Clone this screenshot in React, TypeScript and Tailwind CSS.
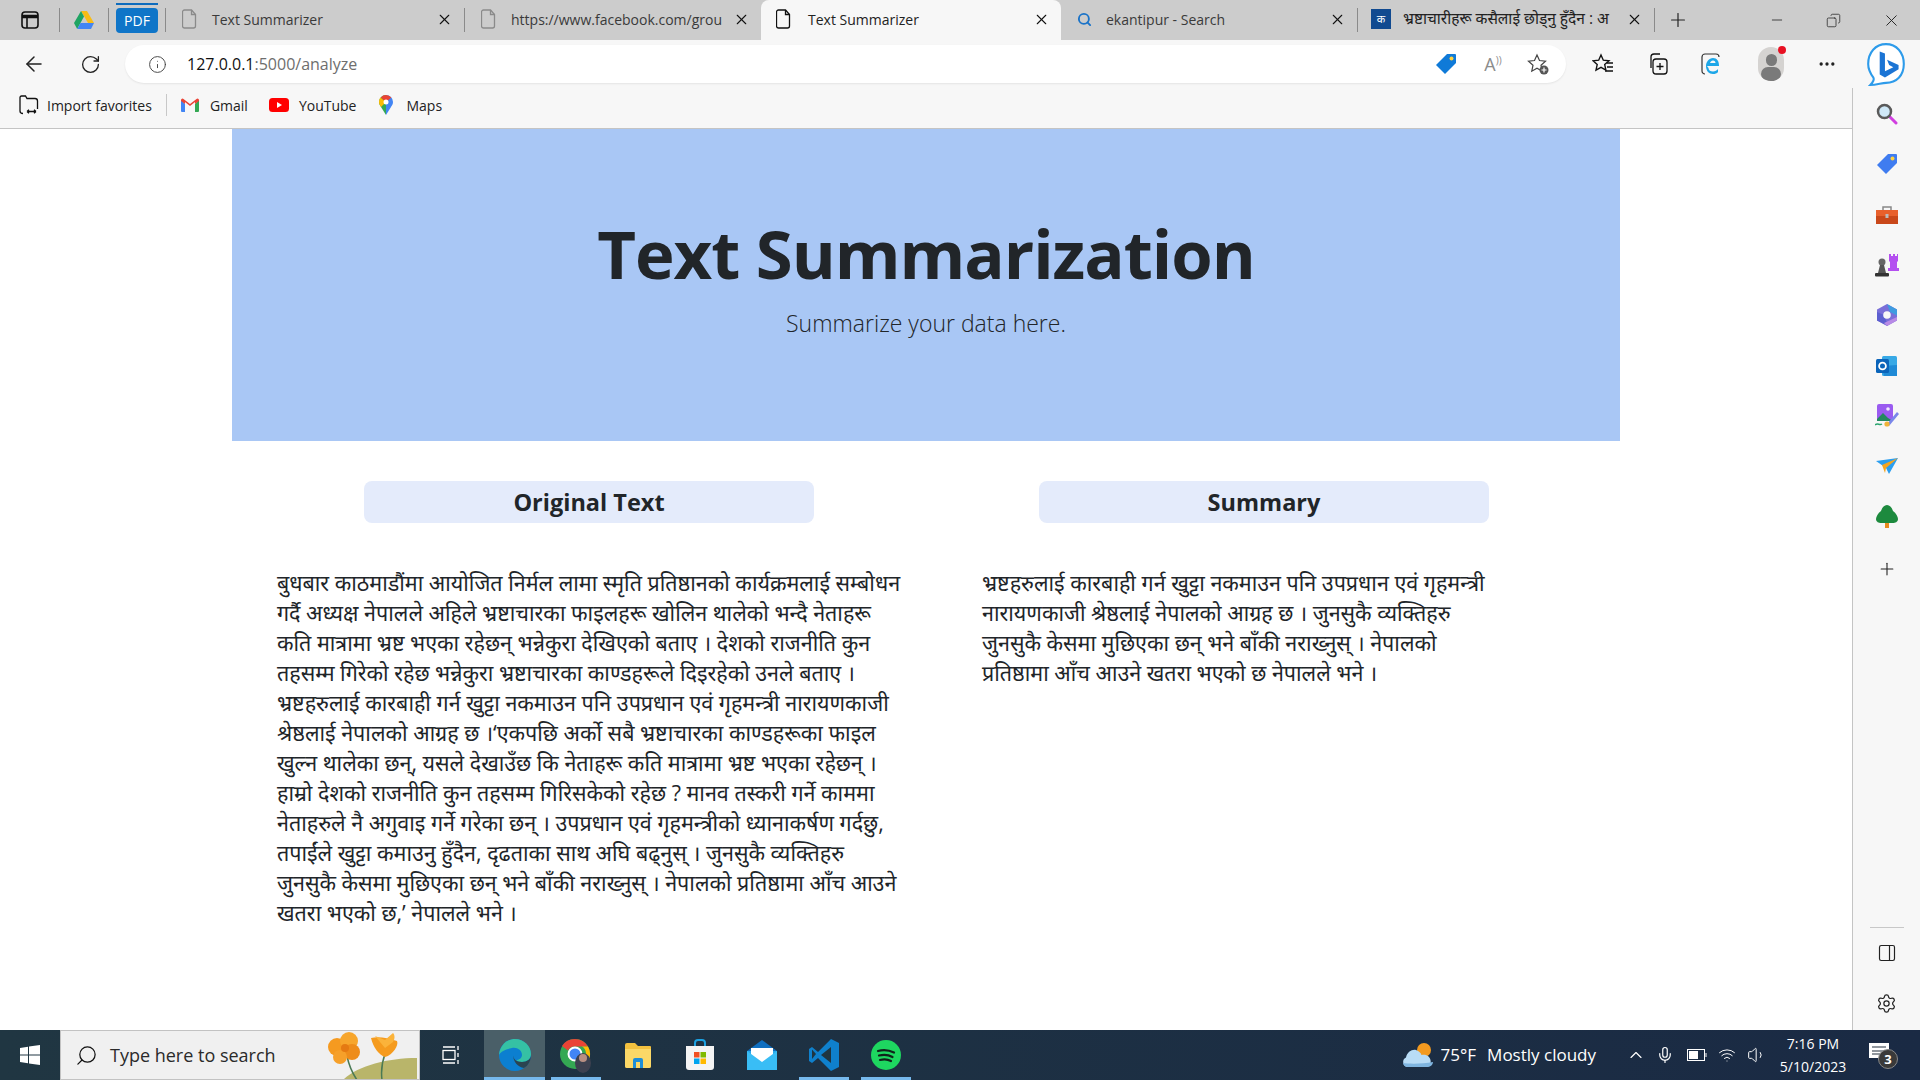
import React from "react";
import { ArrowLeft, RotateCw, Info, X, Plus, Minus, Copy, MoreHorizontal, Search, Settings, PanelRight, ChevronUp, Mic, Volume1, Wifi } from "lucide-react";

const orig = [
  "बुधबार काठमाडौंमा आयोजित निर्मल लामा स्मृति प्रतिष्ठानको कार्यक्रमलाई सम्बोधन",
  "गर्दै अध्यक्ष नेपालले अहिले भ्रष्टाचारका फाइलहरू खोलिन थालेको भन्दै नेताहरू",
  "कति मात्रामा भ्रष्ट भएका रहेछन् भन्नेकुरा देखिएको बताए । देशको राजनीति कुन",
  "तहसम्म गिरेको रहेछ भन्नेकुरा भ्रष्टाचारका काण्डहरूले दिइरहेको उनले बताए ।",
  "भ्रष्टहरुलाई कारबाही गर्न खुट्टा नकमाउन पनि उपप्रधान एवं गृहमन्त्री नारायणकाजी",
  "श्रेष्ठलाई नेपालको आग्रह छ ।‘एकपछि अर्को सबै भ्रष्टाचारका काण्डहरूका फाइल",
  "खुल्न थालेका छन्, यसले देखाउँछ कि नेताहरू कति मात्रामा भ्रष्ट भएका रहेछन् ।",
  "हाम्रो देशको राजनीति कुन तहसम्म गिरिसकेको रहेछ ? मानव तस्करी गर्ने काममा",
  "नेताहरुले नै अगुवाइ गर्ने गरेका छन् । उपप्रधान एवं गृहमन्त्रीको ध्यानाकर्षण गर्दछु,",
  "तपाईंले खुट्टा कमाउनु हुँदैन, दृढताका साथ अघि बढ्नुस् । जुनसुकै व्यक्तिहरु",
  "जुनसुकै केसमा मुछिएका छन् भने बाँकी नराख्नुस् । नेपालको प्रतिष्ठामा आँच आउने",
  "खतरा भएको छ,’ नेपालले भने ।",
];
const summary = [
  "भ्रष्टहरुलाई कारबाही गर्न खुट्टा नकमाउन पनि उपप्रधान एवं गृहमन्त्री",
  "नारायणकाजी श्रेष्ठलाई नेपालको आग्रह छ । जुनसुकै व्यक्तिहरु",
  "जुनसुकै केसमा मुछिएका छन् भने बाँकी नराख्नुस् । नेपालको",
  "प्रतिष्ठामा आँच आउने खतरा भएको छ नेपालले भने ।",
];

const Sep = () => <div className="w-px h-[24px] bg-[#8a8a8a] shrink-0" />;

const FileIcon = ({ c = "#8a8a8a" }: { c?: string }) => (
  <svg width="16" height="20" viewBox="0 0 16 20" fill="none" stroke={c} strokeWidth="1.300">
    <path d="M2.500 1h7l4 4.500V17a2 2 0 0 1-2 2h-9a2 2 0 0 1-2-2V3a2 2 0 0 1 2-2z" />
    <path d="M9.500 1v4.500h4" />
  </svg>
);

const Tab = ({ w, icon, label, active, pl = 16, gap = 14, big }: { w: string; icon: React.ReactNode; label: string; active?: boolean; pl?: number; gap?: number; big?: boolean }) => (
  <div className={`${w} ${active ? "bg-[#f7f7f7] rounded-t-lg text-[#222]" : "text-[#3a3a3a]"} h-full flex items-center shrink-0 ${pl === 15 ? "pl-[15px]" : "pl-[16px]"} pr-[11px] pb-[2px]`}>
    <div className="w-[16px] flex justify-center shrink-0">{icon}</div>
    <div className={`flex-1 min-w-0 whitespace-nowrap ${gap === 16 ? "ml-[16px]" : "ml-[14px]"} ${big ? "text-[15.500px] text-[#222]" : "text-[14px]"}`}>{label}</div>
    <X size={17} strokeWidth={1.500} className="shrink-0 ml-[2px] text-[#111]" />
  </div>
);

const Drive = () => (
  <svg width="20" height="18" viewBox="0 0 20 18">
    <path d="M7 0h6l7 12h-6z" fill="#f9bc15" />
    <path d="M7 0l3 5.500L3.200 18 0 12z" fill="#1fa463" />
    <path d="M6.500 12H20l-3 6H3.200z" fill="#4285f4" />
  </svg>
);
const Gmail = () => (
  <svg width="18" height="14" viewBox="0 0 18 14">
    <path d="M0 2v11a1 1 0 0 0 1 1h3V6z" fill="#4285f4" />
    <path d="M18 2v11a1 1 0 0 1-1 1h-3V6z" fill="#34a853" />
    <path d="M0 2a1.500 1.500 0 0 1 2.500-1L9 6l6.500-5A1.500 1.500 0 0 1 18 2v1l-4 3V4L9 8 4 4v2L0 3z" fill="#ea4335" />
  </svg>
);
const YouTube = () => (
  <svg width="20" height="14" viewBox="0 0 20 14">
    <rect width="20" height="14" rx="3.500" fill="#f00" />
    <path d="M8 4l5 3-5 3z" fill="#fff" />
  </svg>
);
const Pin = () => (
  <svg width="14" height="20" viewBox="0 0 14 20">
    <path d="M7 0a7 7 0 0 1 7 7c0 2-1 3.500-2 5L7 20z" fill="#4285f4" />
    <path d="M7 0a7 7 0 0 0-7 7c0 2 1 3.500 2 5l5 8z" fill="#34a853" />
    <path d="M1.500 2.500 7 7 2 12C1 10.500 0 9 0 7c0-1.700.5-3.300 1.500-4.500z" fill="#fbbc04" />
    <path d="M7 0a7 7 0 0 1 5.300 2.500L7 7 1.800 2.400A7 7 0 0 1 7 0z" fill="#ea4335" />
    <circle cx="7" cy="7" r="2.500" fill="#fff" />
  </svg>
);
const Tag = ({ s = 22, c = "#0f7ad8" }: { s?: number; c?: string }) => (
  <svg width={s} height={s} viewBox="0 0 22 22">
    <path d="M12 1h8a1 1 0 0 1 1 1v8L10 21 1 12z" fill={c} />
    <circle cx="16.500" cy="5.500" r="2" fill="#ffd23f" />
  </svg>
);
const Bing = () => (
  <svg width="42" height="44" viewBox="0 0 40 42" fill="none">
    <path d="M20 2c10 0 17 8 17 19s-7 18-17 18c-4 0-9 2-15 2 3-3 4-5 3-7-3-4-5-8-5-13C3 10 10 2 20 2z" stroke="#2d9bea" strokeWidth="2" fill="#fff" />
    <path d="M14 9l5 2v17l8-4-4-2-2-5 11 5v4l-13 8-5-3z" fill="#1b74d4" />
  </svg>
);
const Edge = () => (
  <svg width="34" height="34" viewBox="0 0 34 34">
    <circle cx="17" cy="17" r="16" fill="#0c7fd0" />
    <path d="M1 17C2 7 9 1 17 1c9 0 16 7 16 15 0 5-4 8-9 8-4 0-6-2-6-2 3 0 6-2 6-5 0-5-5-8-10-7C8 11 3 13 1 17z" fill="#35c1a4" />
    <path d="M33 17c0 4-4 7-9 7-6 0-9-3-9-8 0 8 5 13 11 14 4-2 7-7 7-13z" fill="#2b4450" />
  </svg>
);
const Chrome = () => (
  <svg width="34" height="36" viewBox="0 0 34 36">
    <circle cx="16" cy="17" r="15" fill="#34a853" />
    <path d="M16 2a15 15 0 0 1 13 7.500H16a7.500 7.500 0 0 0-7 4L3 9A15 15 0 0 1 16 2z" fill="#ea4335" />
    <path d="M29 9.500A15 15 0 0 1 18 32l6-10a7.500 7.500 0 0 0-1-12.500z" fill="#fbbc04" />
    <circle cx="16" cy="17" r="6.500" fill="#4285f4" stroke="#fff" strokeWidth="2" />
    <ellipse cx="24" cy="26" rx="8" ry="10" fill="#3d4150" />
    <circle cx="24" cy="21" r="4" fill="#b88f83" />
  </svg>
);
const Folder = () => (
  <svg width="28" height="28" viewBox="0 0 28 28">
    <path d="M1 4a2 2 0 0 1 2-2h8l3 3h12a1 1 0 0 1 1 1v19a2 2 0 0 1-2 2H3a2 2 0 0 1-2-2z" fill="#f3c13f" />
    <path d="M1 8h26v17a2 2 0 0 1-2 2H3a2 2 0 0 1-2-2z" fill="#fbd867" />
    <path d="M9 27v-8a2 2 0 0 1 2-2h6a2 2 0 0 1 2 2v8h-3v-6h-4v6z" fill="#1d8ed8" />
  </svg>
);
const Store = () => (
  <svg width="30" height="32" viewBox="0 0 30 32">
    <path d="M10 8V4a3 3 0 0 1 3-3h4a3 3 0 0 1 3 3v4" fill="none" stroke="#1ba1e2" strokeWidth="2" />
    <path d="M1 7h28v21a3 3 0 0 1-3 3H4a3 3 0 0 1-3-3z" fill="#f4f4f4" />
    <rect x="9" y="13" width="5.500" height="5.500" fill="#f25022" />
    <rect x="15.500" y="13" width="5.500" height="5.500" fill="#7fba00" />
    <rect x="9" y="19.500" width="5.500" height="5.500" fill="#00a4ef" />
    <rect x="15.500" y="19.500" width="5.500" height="5.500" fill="#ffb900" />
  </svg>
);
const Mail = () => (
  <svg width="30" height="30" viewBox="0 0 30 30">
    <path d="M0 11 15 0l15 11z" fill="#0f6fc0" />
    <path d="M0 11h30v19H0z" fill="#27a8ea" />
    <path d="M4 8h22v8l-11 7-11-7z" fill="#fff" />
    <path d="M0 11l15 11 15-11v19H0z" fill="#39bdf5" />
  </svg>
);
const VSCode = () => (
  <svg width="30" height="32" viewBox="0 0 30 32">
    <path d="M22 0l8 4v24l-8 4-13-13-6 5-3-2v-12l3-2 6 5z" fill="#0f80cc" />
    <path d="M22 8v16l-10-8z" fill="#1f3540" />
    <path d="M3 10.500 7 15 3 20z" fill="#1f3540" />
  </svg>
);
const Spotify = () => (
  <svg width="30" height="30" viewBox="0 0 30 30" fill="none">
    <circle cx="15" cy="15" r="15" fill="#1ed760" />
    <path d="M7 11c5-1.500 11-1 16 1.500M8 15.500c4.500-1.200 9.500-.8 13.500 1.500M9 20c3.500-1 8-.7 11 1" stroke="#10231a" strokeWidth="2.200" strokeLinecap="round" />
  </svg>
);
const Cloud = () => (
  <svg width="32" height="28" viewBox="0 0 32 28">
    <circle cx="22" cy="9" r="7" fill="#f39a1f" />
    <path d="M6 26a5 5 0 0 1-2-9.500C5 11 10 8 14 9c3 1 5 3 5.500 5 3-1 8 0 9 5 1 4-2 7-5 7z" fill="#b8dcf6" />
    <path d="M6 26a5 5 0 0 1-5-4c6 1 20 1 30-1 0 3-3 5-6 5z" fill="#7fb5e0" />
  </svg>
);
const Flowers = () => (
  <svg width="104" height="50" viewBox="0 0 100 50" className="shrink-0">
    <path d="M26 50C40 36 70 28 100 28v22z" fill="#b9b56a" />
    <path d="M30 26c2 10 6 18 10 24" stroke="#4a7a55" strokeWidth="1.500" fill="none" />
    <path d="M68 24c-3 8-4 18-3 26" stroke="#4a7a55" strokeWidth="1.500" fill="none" />
    <circle cx="20" cy="17" r="9" fill="#f59a20" />
    <circle cx="32" cy="11" r="9" fill="#f7a62c" />
    <circle cx="35" cy="22" r="8" fill="#ee8c1a" />
    <circle cx="23" cy="27" r="7" fill="#f6a02a" />
    <circle cx="28" cy="18" r="4" fill="#e57a12" />
    <path d="M54 8c8-2 16 0 26 3 2 4-4 14-12 16-6-2-12-10-14-19z" fill="#f59b1e" />
    <path d="M58 6l10 4 8-7c2 2 2 6 0 9l-8 6z" fill="#fbb33a" />
  </svg>
);

const SideGlyphs = [
  <svg width="22" height="22" viewBox="0 0 22 22" key="a"><path d="M13 13l7 7" stroke="#d13fe0" strokeWidth="3" strokeLinecap="round" /><circle cx="8.500" cy="8.500" r="6.500" fill="#cfe8f7" stroke="#5a5a5a" strokeWidth="2.500" /></svg>,
  <Tag key="b" s={22} c="#3f7cf0" />,
  <svg width="24" height="20" viewBox="0 0 24 20" key="c"><path d="M8 5V2h8v3" fill="none" stroke="#888" strokeWidth="1.500" /><path d="M1 5h22v6H1z" fill="#e8602c" /><path d="M1 11h22v8H1z" fill="#c9481a" /><rect x="10.500" y="9" width="3" height="4" fill="#bbb" /></svg>,
  <svg width="24" height="24" viewBox="0 0 24 24" key="d"><path d="M14 1h2v2h2V1h2v2h2V1h1v7l-1 1v6h2v3H13v-3h2V9l-1-1z" fill="#b44ff0" /><circle cx="7" cy="9" r="3.500" fill="#666" /><path d="M5 12h4l2 8H3z" fill="#555" /><rect x="0" y="20" width="14" height="3.500" rx="1" fill="#333" /></svg>,
  <svg width="22" height="24" viewBox="0 0 22 24" key="e"><path d="M11 1l10 5.500v11L11 23 1 17.500v-11z" fill="#7a6fd8" /><path d="M11 1l10 5.500v6L14 9z" fill="#3f9be0" /><path d="M1 17.500V9l7 3 4 11z" fill="#5c5fd0" /><path d="M21 14v3.500L11 23l-3-3z" fill="#b88ae6" /><circle cx="11" cy="12" r="3.800" fill="#f7f7f7" /></svg>,
  <svg width="22" height="22" viewBox="0 0 22 22" key="f"><rect x="6" y="1" width="15" height="20" rx="1.500" fill="#38a9e6" /><path d="M6 11l15-1v11H8z" fill="#1f8ad6" /><rect x="0" y="4" width="13" height="14" rx="1.500" fill="#0a64ba" /><circle cx="6.500" cy="11" r="3.400" fill="none" stroke="#fff" strokeWidth="1.800" /></svg>,
  <svg width="24" height="24" viewBox="0 0 24 24" key="g"><rect x="2" y="0" width="16" height="17" rx="2" fill="#9a5bf0" /><path d="M2 15l6-6 5 5 5 3H2z" fill="#23895f" /><circle cx="13" cy="5" r="1.800" fill="#f0e6ff" /><path d="M12 20L22 8l2 2-10 12z" fill="#7a86ea" /><circle cx="12" cy="20" r="2.600" fill="#f0b43a" /><path d="M0 21c3-3 4 1 7-1" stroke="#2aa56f" strokeWidth="1.500" fill="none" /></svg>,
  <svg width="22" height="16" viewBox="0 0 22 16" key="h"><path d="M0 3l22-3-9 16-3-6z" fill="#2a9ef0" /><path d="M6 7L22 0 10 10l-1 5z" fill="#f4a521" /></svg>,
  <svg width="22" height="24" viewBox="0 0 22 24" key="i"><rect x="9" y="17" width="4" height="6" fill="#e88c1f" /><path d="M11 0c3 0 5 3 6 6 3 2 5 6 5 8 0 3-3 4-5 4H5c-2 0-5-1-5-4 0-2 2-6 5-8 1-3 3-6 6-6z" fill="#1d8a3e" /></svg>,
];

export default function App() {
  return (
    <div className="w-[1920px] h-[1080px] overflow-hidden flex flex-col bg-white font-['Open_Sans','Noto_Sans',sans-serif]">
      {/* tab strip */}
      <div className="h-[40px] bg-[#cccccc] flex items-center shrink-0">
        <div className="w-[59px] flex justify-center">
          <svg width="18" height="18" viewBox="0 0 18 18" fill="none" stroke="#111" strokeWidth="1.600"><rect x="1" y="1" width="16" height="16" rx="3" /><path d="M1 5.500h16" strokeWidth="3.500" /><path d="M6 6v11" /></svg>
        </div>
        <Sep />
        <div className="w-[48px] flex justify-center"><Drive /></div>
        <Sep />
        <div className="w-[56px] h-full flex justify-center items-center relative">
          <div className="absolute top-[3px] left-[7px] w-[42px] h-[2px] bg-[#0f6cbd]" />
          <div className="w-[42px] h-[25px] bg-[#0f75c8] rounded-[4px] text-white text-[14px] flex items-center justify-center">PDF</div>
        </div>
        <Sep />
        <Tab w="w-[298px]" icon={<FileIcon />} label="Text Summarizer" />
        <Sep />
        <Tab w="w-[296px]" icon={<FileIcon />} label="https://www.facebook.com/grou" />
        <Tab w="w-[300px]" active pl={15} gap={16} icon={<FileIcon c="#111" />} label="Text Summarizer" />
        <Tab w="w-[296px]" pl={15} icon={<Search size={15} strokeWidth={3} className="text-[#1a73c8]" />} label="ekantipur - Search" />
        <Sep />
        <Tab w="w-[296px]" pl={15} big icon={<div className="w-[20px] h-[20px] bg-[#114a90] text-white text-[11px] leading-[20px] text-center shrink-0">क</div>} label="भ्रष्टाचारीहरू कसैलाई छोड्नु हुँदैन : अ" />
        <Sep />
        <div className="w-[46px] flex justify-center"><Plus size={22} strokeWidth={1.300} className="text-[#222]" /></div>
        <div className="flex-1" />
        <div className="w-[57px] flex justify-center"><Minus size={16} strokeWidth={1.200} className="text-[#222]" /></div>
        <div className="w-[57px] flex justify-center"><Copy size={15} strokeWidth={1.200} className="text-[#222] -scale-x-100" /></div>
        <div className="w-[58px] flex justify-center"><X size={19} strokeWidth={1.200} className="text-[#222]" /></div>
      </div>
      {/* toolbar */}
      <div className="h-[48px] bg-[#f7f7f7] flex items-center shrink-0">
        <div className="w-[68px] flex justify-center"><ArrowLeft size={24} strokeWidth={1.500} className="text-[#222]" /></div>
        <div className="w-[44px] flex justify-center"><RotateCw size={21} strokeWidth={1.500} className="text-[#222]" /></div>
        <div className="w-[13px]" />
        <div className="w-[1441px] h-[38px] bg-white rounded-full shadow-[0_1px_2px_rgba(0,0,0,0.08)] flex items-center pl-[23px] pr-[17px]">
          <Info size={19} strokeWidth={1.200} className="text-[#444]" />
          <div className="ml-[20px] text-[16px] text-[#111]">127.0.0.1<span className="text-[#6e6e6e]">:5000/analyze</span></div>
          <div className="flex-1" />
          <Tag s={22} />
          <div className="ml-[20px] w-[32px] text-center text-[#8c8c8c] text-[18px] leading-none">A<span className="text-[10px] align-super">&#x29;&#x29;</span></div>
          <div className="ml-[18px] w-[22px] h-[22px]">
            <svg width="22" height="22" viewBox="0 0 22 22" fill="none" stroke="#444" strokeWidth="1.200"><path d="M10 2l2.500 5.500 6 .7-4.500 4 1.200 6L10 15.300 4.800 18.200 6 12.200 1.500 8.200l6-.7z" /><circle cx="17" cy="17" r="4.500" fill="#555" stroke="none" /><path d="M17 14.500v5M14.500 17h5" stroke="#fff" /></svg>
          </div>
        </div>
        <div className="w-[13px]" />
        <div className="w-[48px] flex justify-center">
          <svg width="22" height="22" viewBox="0 0 22 22" fill="none" stroke="#111" strokeWidth="1.400"><path d="M9 2l2.300 5.200 5.700.6-4.300 3.800 1.200 5.600L9 14.400 4 17.200l1.200-5.600L1 7.800l5.700-.6z" /><path d="M15 10h6M15 14h6M13 18h8" /></svg>
        </div>
        <div className="w-[62px] flex justify-center">
          <svg width="22" height="22" viewBox="0 0 22 22" fill="none" stroke="#111" strokeWidth="1.300"><path d="M4 15V4a3 3 0 0 1 3-3h6" /><rect x="6" y="6" width="14" height="15" rx="3" /><path d="M13 10v7M9.500 13.500h7" /></svg>
        </div>
        <div className="w-[46px] flex justify-center">
          <svg width="22" height="22" viewBox="0 0 22 22" fill="none"><path d="M4 21a3 3 0 0 1-3-3V4a3 3 0 0 1 3-3h11a3 3 0 0 1 3 3" stroke="#333" strokeWidth="1.200" /><path d="M6 13h12c0-5-2-8-6-8s-7 4-7 8c0 5 3 8 7 8 2 0 4-.6 5-2v-3c-1 1.500-3 2.500-5 2.500-2.500 0-4.500-1-4.500-3.500zM9 10c.5-1.500 1.500-2.500 3-2.500s2.500 1 2.500 2.500z" fill="#1ea7e8" /></svg>
        </div>
        <div className="w-[72px] flex justify-center">
          <div className="relative w-[26px] h-[34px]">
            <div className="w-full h-full rounded-full bg-[#d5d3d1] overflow-hidden flex flex-col items-center">
              <div className="w-[11px] h-[12px] rounded-full bg-[#7a7a7a] mt-[7px] shrink-0" />
              <div className="w-[20px] h-[14px] rounded-full bg-[#7a7a7a] mt-[1px] shrink-0" />
            </div>
            <div className="absolute right-[-2px] top-[-1px] w-[8px] h-[8px] rounded-full bg-[#e81123]" />
          </div>
        </div>
        <div className="w-[40px] flex justify-center"><MoreHorizontal size={20} strokeWidth={2} className="text-[#222]" /></div>
        <div className="w-[73px] flex justify-center pl-[5px]"><Bing /></div>
      </div>
      {/* middle */}
      <div className="flex-1 flex min-h-0">
        <div className="flex-1 flex flex-col min-w-0">
          <div className="h-[41px] shrink-0 bg-[#f7f7f7] border-b border-[#c4c4c4] flex items-center pb-[6px] text-[14px] text-[#222]">
            <div className="w-[47px] flex justify-center pl-[10px]">
              <svg width="20" height="20" viewBox="0 0 20 20" fill="none" stroke="#111" strokeWidth="1.300"><path d="M1 16V2.500A1.500 1.500 0 0 1 2.500 1h4l1.500 2.500h8A2.500 2.500 0 0 1 18.500 6v8" /><path d="M1 16c0 1.500 1 2.500 3 2.500M8 16.500h9M8 16.500l2-1.800M8 16.500l2 1.800M17 16.500l-2-1.800M17 16.500l-2 1.800" /></svg>
            </div>
            <div>Import favorites</div>
            <div className="w-px h-[22px] bg-[#c8c8c8] ml-[14px] mr-[13px]" />
            <div className="w-[20px] flex justify-center"><Gmail /></div>
            <div className="ml-[10px]">Gmail</div>
            <div className="w-[21px]" />
            <div className="w-[20px] flex justify-center"><YouTube /></div>
            <div className="ml-[10px]">YouTube</div>
            <div className="w-[20px]" />
            <div className="w-[20px] flex justify-center"><Pin /></div>
            <div className="ml-[10px]">Maps</div>
          </div>
          <div className="flex-1 min-h-0 bg-white overflow-hidden flex flex-col items-center">
            <div className="w-[1388px] h-[312px] shrink-0 bg-[#a9c7f5] pt-[81px] flex flex-col items-center text-[#212529]">
              <h1 className="text-[67px] leading-[86px] font-bold tracking-[-1px]">Text Summarization</h1>
              <p className="mt-[9px] text-[23px] leading-[36px] font-light">Summarize your data here.</p>
            </div>
            <div className="w-[1388px] flex pl-[45px] pt-[40px] text-[#212529]">
              <div className="w-[705px] shrink-0">
                <div className="ml-[87px] w-[450px] h-[42px] pt-px rounded-lg bg-[#e4ebfb] flex items-center justify-center text-[23.500px] font-bold">Original Text</div>
                <div className="mt-[45px] text-[21.500px] leading-[30px] whitespace-nowrap">
                  {orig.map((l) => <div key={l}>{l}</div>)}
                </div>
              </div>
              <div className="flex-1">
                <div className="ml-[57px] w-[450px] h-[42px] pt-px rounded-lg bg-[#e4ebfb] flex items-center justify-center text-[23.500px] font-bold">Summary</div>
                <div className="mt-[45px] text-[21.500px] leading-[30px] whitespace-nowrap">
                  {summary.map((l) => <div key={l}>{l}</div>)}
                </div>
              </div>
            </div>
          </div>
        </div>
        {/* sidebar */}
        <div className="w-[68px] shrink-0 bg-[#f7f7f7] border-l border-[#c4c4c4] flex flex-col items-center pt-px pb-[2px]">
          {SideGlyphs.map((g, i) => (
            <div key={i} className="h-[50.3px] flex items-center justify-center">{g}</div>
          ))}
          <div className="h-[54px] flex items-center justify-center"><Plus size={20} strokeWidth={1.300} className="text-[#222]" /></div>
          <div className="flex-1" />
          <div className="w-[34px] h-px bg-[#c8c8c8]" />
          <div className="h-[50px] flex items-center justify-center"><PanelRight size={20} strokeWidth={1.400} className="text-[#222]" /></div>
          <div className="h-[50px] flex items-center justify-center"><Settings size={21} strokeWidth={1.400} className="text-[#222]" /></div>
        </div>
      </div>
      {/* taskbar */}
      <div className="h-[50px] shrink-0 bg-gradient-to-r from-[#203642] to-[#1a2a44] flex items-center text-white">
        <div className="w-[60px] flex justify-center">
          <svg width="20" height="20" viewBox="0 0 20 20" fill="#fff"><path d="M0 3l8-1.200V9.500H0zM9 1.600 20 0v9.500H9zM0 10.500h8v7.700L0 17zM9 10.500h11V20L9 18.400z" /></svg>
        </div>
        <div className="w-[360px] h-full bg-[#f0f0f0] border border-[#c2c2c2] flex items-center text-[#2a2a2a] overflow-hidden">
          <Search size={23} strokeWidth={1.300} className="ml-[14px] -scale-x-100 text-[#111]" />
          <div className="ml-[12px] text-[18px] flex-1 whitespace-nowrap">Type here to search</div>
          <Flowers />
        </div>
        <div className="w-[64px] flex justify-center">
          <svg width="20" height="20" viewBox="0 0 20 20" fill="none" stroke="#fff" strokeWidth="1.300"><rect x="1" y="5.500" width="12" height="9" /><path d="M1 2h12M1 18h12M16 1v4M16 8v4M16 15v4" /></svg>
        </div>
        <div className="w-[61px] h-full bg-[#4a5f68] flex flex-col items-center justify-end">
          <div className="flex-1 flex items-center pt-[2px]"><Edge /></div>
          <div className="w-full h-[3px] bg-[#76b9ed]" />
        </div>
        <div className="w-[62px] h-full flex flex-col items-center">
          <div className="flex-1 flex items-center pt-[2px]"><Chrome /></div>
          <div className="w-[50px] h-[3px] bg-[#76b9ed]" />
        </div>
        <div className="w-[62px] h-full flex flex-col items-center">
          <div className="flex-1 flex items-center"><Folder /></div>
        </div>
        <div className="w-[62px] h-full flex flex-col items-center">
          <div className="flex-1 flex items-center"><Store /></div>
        </div>
        <div className="w-[62px] h-full flex flex-col items-center">
          <div className="flex-1 flex items-center"><Mail /></div>
        </div>
        <div className="w-[62px] h-full flex flex-col items-center">
          <div className="flex-1 flex items-center pt-[2px]"><VSCode /></div>
          <div className="w-[50px] h-[3px] bg-[#76b9ed]" />
        </div>
        <div className="w-[62px] h-full flex flex-col items-center">
          <div className="flex-1 flex items-center pt-[2px]"><Spotify /></div>
          <div className="w-[50px] h-[3px] bg-[#76b9ed]" />
        </div>
        <div className="flex-1" />
        <Cloud />
        <div className="ml-[7px] text-[17px] whitespace-nowrap">75°F<span className="ml-[11px]">Mostly cloudy</span></div>
        <div className="w-[30px]" />
        <ChevronUp size={20} strokeWidth={1.400} className="text-white" />
        <div className="w-[10px]" />
        <Mic size={18} strokeWidth={1.600} className="text-white" />
        <div className="w-[13px]" />
        <svg width="20" height="12" viewBox="0 0 20 12" fill="none" stroke="#fff"><rect x=".5" y=".5" width="17" height="11" /><rect x="2" y="2" width="9" height="8" fill="#fff" stroke="none" /><path d="M19 4v4" /></svg>
        <div className="w-[11px]" />
        <Wifi size={18} strokeWidth={1.300} className="text-white" />
        <div className="w-[11px]" />
        <div className="flex items-center"><Volume1 size={20} strokeWidth={1.200} className="text-white" /></div>
        <div className="w-[10px]" />
        <div className="w-[72px] text-[14px] text-center leading-[23px] whitespace-nowrap">
          <div>7:16 PM</div>
          <div>5/10/2023</div>
        </div>
        <div className="w-[20px]" />
        <div className="relative w-[24px] h-[24px] mr-[27px]">
          <svg width="20" height="18" viewBox="0 0 20 18" fill="#fff"><path d="M0 0h20v15H0z" /><path d="M3 4h14M3 8h14M3 11h9" stroke="#24303f" strokeWidth="1.200" /></svg>
          <div className="absolute left-[9px] top-[6px] w-[20px] h-[20px] rounded-full bg-[#3a3a3a] border border-[#888] text-[13px] leading-[18px] font-bold text-center">3</div>
        </div>
      </div>
    </div>
  );
}
